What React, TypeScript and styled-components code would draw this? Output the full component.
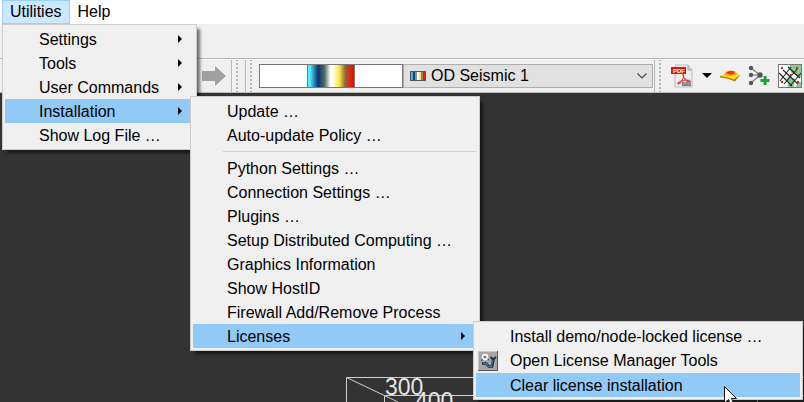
import React from "react";
import styled, { createGlobalStyle, css } from "styled-components";

const GlobalStyle = createGlobalStyle`
  *, *::before, *::after { box-sizing: border-box; }
  html, body, #root { height: 100%; }
  body {
    margin: 0;
    overflow: hidden;
    background: #333;
    color: #000;
    font: 16px/24px "Liberation Sans", Arial, sans-serif;
  }
  button, select { font: inherit; color: inherit; }
`;

const Window = styled.div`
  position: relative;
  display: flex;
  flex-direction: column;
  height: 100%;
  overflow: hidden;
`;

const MenuBar = styled.nav`
  display: flex;
  height: 24px;
  padding-left: 2px;
  background: #fff;
`;

const MenuBarSlot = styled.div`
  position: relative;
  z-index: 2;
`;

const MenuBarButton = styled.button<{ $open?: boolean }>`
  height: 24px;
  padding: 0 7px;
  line-height: 22px;
  border: 1px solid ${(p) => (p.$open ? "#99d1ff" : "transparent")};
  background: ${(p) => (p.$open ? "#cce8ff" : "transparent")};
`;

const Menu = styled.ul<{ $level: "top" | "sub" | "leaf" }>`
  position: absolute;
  z-index: 1;
  margin: 0;
  padding: 2px;
  list-style: none;
  background: #f0f0f0;
  border: 1px solid #ccc;
  box-shadow: 4px 4px 3px -1px rgba(0, 0, 0, 0.55);
  ${(p) => p.$level === "top" && css`top: 24px; left: 0; width: 195px;`}
  ${(p) => p.$level === "sub" && css`top: -3px; left: 185px; width: 290px;`}
  ${(p) => p.$level === "leaf" && css`top: -3px; left: 280px; width: 330px;`}
`;

const MenuItem = styled.li`
  position: relative;
`;

const MenuButton = styled.button<{ $active?: boolean }>`
  display: grid;
  grid-template-columns: 34px 1fr 17px;
  align-items: center;
  width: 100%;
  padding: 0;
  border: 0;
  text-align: left;
  white-space: nowrap;
  background: ${(p) => (p.$active ? "#91c9f7" : "transparent")};
`;

const MenuLabel = styled.span`
  align-self: start;
  padding-top: 2px;
  line-height: 22px;
`;

const IconCell = styled.span`
  display: flex;
  height: 24px;
  align-items: center;
  padding-left: 2px;
  &:has(svg) { height: 25px; }
`;

const Divider = styled.li`
  height: 1px;
  margin: 4px 1px 4px 30px;
  background: #d0d0d0;
`;

const UpperToolbar = styled.div`
  height: 35px;
  background: #f0f0f0;
  border-bottom: 1px solid #b8b8b8;
`;

const Toolbar = styled.div`
  display: flex;
  height: 34px;
  align-items: center;
  padding-left: 201px;
  overflow: hidden;
  background: #f0f0f0;
  border-top: 1px solid #fafafa;
  border-bottom: 1px solid #bbb;
`;

const Handle = styled.span`
  flex: none;
  align-self: stretch;
  width: 14px;
  border-left: 1px solid #b8b8b8;
  background: linear-gradient(#b4b4b4 2px, transparent 2px) 4px 3px / 2px 4px repeat-y;
`;

const ToolButton = styled.button`
  display: flex;
  flex: none;
  padding: 0;
  border: 0;
  background: none;
`;

const ToolGroup = styled.div`
  display: flex;
  flex: none;
  align-items: center;
  gap: 8px;
  padding: 0 2px;
`;

const ForwardGroup = styled.div`
  flex: none;
  width: 30px;
`;

const ColorBar = styled.div`
  display: grid;
  grid-template-columns: 1fr 48px 1fr;
  flex: none;
  width: 144px;
  height: 24px;
  background: #fff;
  border: 1px solid #777;
`;

const Spectrum = styled.span`
  border: solid #777;
  border-width: 0 1px;
  background: linear-gradient(90deg, #5ff 0, #4ce5f5 5%, #08306f 22%, #4e6d62 36%, #fff 49%, #fff 53%, #ffec4a 67%, #8b6940 81%, #f01808 94%, #f00 100%);
`;

const SelectBox = styled.div`
  position: relative;
  display: grid;
  flex: 1;
  min-width: 120px;
  height: 24px;
  margin-right: 1px;
  & > svg { position: absolute; top: 7px; pointer-events: none; }
  & > svg:first-child { left: 7px; }
  & > svg:last-child { top: 9px; right: 6px; }
`;

const ColorSelect = styled.select`
  appearance: none;
  width: 100%;
  height: 24px;
  padding: 0 24px 0 27px;
  line-height: 22px;
  background: #e1e1e1;
  border: 1px solid #adadad;
  border-radius: 0;
`;

const Scene = styled.main`
  flex: 1;
  min-height: 0;
  overflow: hidden;
  background: #333;
  & > svg { display: block; width: 100%; height: 100%; }
`;

const Pointer = styled.svg`
  position: absolute;
  z-index: 3;
  left: 248px;
  top: 13px;
  pointer-events: none;
`;

const SubArrow = () => (
  <svg width="6" height="8" viewBox="0 0 6 8" aria-hidden="true">
    <path d="M1 0 5 4 1 8Z" fill="#000" />
  </svg>
);

const LicenseIcon = () => (
  <svg width="20" height="20" viewBox="0 0 20 20" aria-hidden="true">
    <rect width="20" height="20" fill="#a6a6a6" />
    <path d="M0 20V0H20" fill="none" stroke="#c8c8c8" strokeWidth="2" />
    <path d="M0 19.5H19.5V0" fill="none" stroke="#555" />
    <path d="M4 12.500H8L11 15.500H14L15.500 8" fill="none" stroke="#1d2a36" strokeWidth="2.6" />
    <path d="M5 12.500H8L11 15.500H13.500L15 9" fill="none" stroke="#3d7db5" strokeWidth="1.1" />
    <path d="M12.500 6 15 8.500 18 6" fill="none" stroke="#1d2a36" strokeWidth="1.8" />
    <circle cx="7" cy="6" r="2.4" fill="#777" stroke="#fff" strokeWidth="1.8" />
    <path d="M3 9.500 5 8.500M9.500 8 11 9" stroke="#333" />
  </svg>
);

const ForwardIcon = () => (
  <svg width="26" height="22" viewBox="0 0 26 22" aria-hidden="true">
    <path d="M1 6H14V1L25 11 14 21V16H1Z" fill="#a0a0a0" />
  </svg>
);

const PdfIcon = () => (
  <svg width="24" height="24" viewBox="0 0 24 24" aria-hidden="true">
    <path d="M5 1H18L22 6V23H5Z" fill="#eee" stroke="#bbb" />
    <path d="M18 1V6H22" fill="#ccc" stroke="#aaa" />
    <rect x="1" y="3" width="15" height="7" fill="#e4120e" />
    <text x="3" y="9" fontSize="6" fontWeight="700" fill="#fff">PDF</text>
    <path d="M13 10c-1 2 1 4 4 7 2 2 4 1 3 0-2-2-8-1-12 2-1 1 1 2 3-1 2-3 4-6 2-8Z" fill="none" stroke="#e34040" strokeWidth="1.1" />
    <path d="M12 18h9v4h-9z" fill="#777" />
    <path d="M13 21l2-3 1 3m2-3v3m2-3v3" stroke="#ccc" fill="none" strokeWidth=".7" />
  </svg>
);

const DropIcon = () => (
  <svg width="10" height="6" viewBox="0 0 10 6" aria-hidden="true">
    <path d="M0 0H10L5 5Z" fill="#000" />
  </svg>
);

const HorizonIcon = () => (
  <svg width="20" height="12" viewBox="0 0 20 12" aria-hidden="true">
    <path d="M0 6 7 5 20 5 15 11.500Q8 8 0 7.500Z" fill="#a98614" />
    <path d="M0 6Q4 5 6 2 10 0 15 1.500L19.500 5 14 9.500Q8 6.500 0 6Z" fill="#ffdf18" />
    <path d="M4 4.500 6 2Q10 0 15 1.500L17 4Q10 8 4 4.500Z" fill="#ffa016" />
    <path d="M6.500 2.500Q10-.5 14.500 1.500 15 4.500 10 4.500Q7 4 6.500 2.500Z" fill="#ed3510" />
  </svg>
);

const NodesIcon = () => (
  <svg width="22" height="22" viewBox="0 0 22 22" aria-hidden="true">
    <path d="M3 3 12 10 3 18M3 10H12" fill="none" stroke="#777" strokeWidth="1.2" />
    <g fill="#555">
      <circle cx="3" cy="3" r="2.2" />
      <circle cx="3" cy="10" r="2.2" />
      <circle cx="3" cy="18" r="2.2" />
      <circle cx="12" cy="10" r="2.7" />
    </g>
    <path d="M17 11V20M12.500 15.500H21.500" stroke="#20a040" strokeWidth="3" />
  </svg>
);

const MapIcon = () => (
  <svg width="24" height="24" viewBox="0 0 24 24" aria-hidden="true">
    <rect x=".5" y=".5" width="23" height="23" fill="#fff" stroke="#777" />
    <path d="M12 1H23V13Q19 14 16 10 11 9 12 1M10 12 17 15 16 23H9Q12 18 8 16M20 18h3v5h-5Z" fill="#86cc93" />
    <path d="M1 9 14 22M5 6 20 20M10 3 22 14M2 17 13 3M6 20 20 4M12 22 23 9" fill="none" stroke="#222" strokeWidth="1.1" />
    <g fill="#e4202b">
      <circle cx="4" cy="4" r="1.2" />
      <circle cx="13" cy="11" r="1.2" />
      <circle cx="19" cy="4" r="1.2" />
      <circle cx="4" cy="18" r="1.2" />
      <circle cx="20" cy="18" r="1.2" />
    </g>
  </svg>
);

const SwatchIcon = () => (
  <svg width="16" height="10" viewBox="0 0 16 10" aria-hidden="true">
    <rect width="16" height="10" fill="#555" />
    <path d="M1 1h2v8H1z" fill="#39b8d0" />
    <path d="M3 1h2v8H3z" fill="#173e78" />
    <path d="M5 1h2v8H5z" fill="#82968c" />
    <path d="M7 1h2v8H7z" fill="#fff" />
    <path d="M9 1h2v8H9z" fill="#f3e58a" />
    <path d="M11 1h2v8h-2z" fill="#a57b40" />
    <path d="M13 1h2v8h-2z" fill="#d8261c" />
  </svg>
);

const ChevronIcon = () => (
  <svg width="10" height="6" viewBox="0 0 10 6" aria-hidden="true">
    <path d="M.5 .5 5 5 9.500 .5" fill="none" stroke="#444" strokeWidth="1.1" />
  </svg>
);

const CursorIcon = () => (
  <Pointer width="14" height="21" viewBox="0 0 14 21" aria-hidden="true">
    <path d="M.5 .5V17L4.500 13.500 7 19.500 10 18.200 7.500 12.500H12.500Z" fill="#fff" stroke="#111" />
  </Pointer>
);

type Entry = {
  label: string;
  active?: boolean;
  arrow?: boolean;
  icon?: React.ReactNode;
  submenu?: React.ReactNode;
  overlay?: React.ReactNode;
};

const Item = ({ label, active, submenu, arrow, icon, overlay }: Entry) => (
  <MenuItem role="none">
    <MenuButton role="menuitem" $active={active} aria-haspopup={arrow || submenu ? "menu" : undefined}>
      <IconCell>{icon}</IconCell>
      <MenuLabel>{label}</MenuLabel>
      {(arrow || submenu) && <SubArrow />}
    </MenuButton>
    {submenu}
    {overlay}
  </MenuItem>
);

const LicensesMenu = () => (
  <Menu $level="leaf" role="menu" aria-label="Licenses">
    <Item label="Install demo/node-locked license …" />
    <Item label="Open License Manager Tools" icon={<LicenseIcon />} />
    <Item label="Clear license installation" active overlay={<CursorIcon />} />
  </Menu>
);

const InstallationMenu = () => (
  <Menu $level="sub" role="menu" aria-label="Installation">
    <Item label="Update …" />
    <Item label="Auto-update Policy …" />
    <Divider role="separator" />
    <Item label="Python Settings …" />
    <Item label="Connection Settings …" />
    <Item label="Plugins …" />
    <Item label="Setup Distributed Computing …" />
    <Item label="Graphics Information" />
    <Item label="Show HostID" />
    <Item label="Firewall Add/Remove Process" />
    <Item label="Licenses" active submenu={<LicensesMenu />} />
  </Menu>
);

const UtilitiesMenu = () => (
  <Menu $level="top" role="menu" aria-label="Utilities">
    <Item label="Settings" arrow />
    <Item label="Tools" arrow />
    <Item label="User Commands" arrow />
    <Item label="Installation" active submenu={<InstallationMenu />} />
    <Item label="Show Log File …" />
  </Menu>
);

export default function App() {
  return (
    <Window>
      <GlobalStyle />
      <MenuBar>
        <MenuBarSlot>
          <MenuBarButton $open aria-haspopup="menu" aria-expanded="true">Utilities</MenuBarButton>
          <UtilitiesMenu />
        </MenuBarSlot>
        <MenuBarButton aria-haspopup="menu">Help</MenuBarButton>
      </MenuBar>
      <UpperToolbar />
      <Toolbar role="toolbar" aria-label="View tools">
        <ForwardGroup>
          <ToolButton aria-label="Forward"><ForwardIcon /></ToolButton>
        </ForwardGroup>
        <Handle />
        <Handle />
        <ColorBar>
          <span />
          <Spectrum />
          <span />
        </ColorBar>
        <SelectBox>
          <SwatchIcon />
          <ColorSelect aria-label="Color table" defaultValue="seismic1">
            <option value="seismic1">OD Seismic 1</option>
          </ColorSelect>
          <ChevronIcon />
        </SelectBox>
        <Handle />
        <ToolGroup>
          <ToolButton aria-label="Create PDF"><PdfIcon /></ToolButton>
          <ToolButton aria-label="More"><DropIcon /></ToolButton>
          <ToolButton aria-label="Horizon"><HorizonIcon /></ToolButton>
          <ToolButton aria-label="Add node"><NodesIcon /></ToolButton>
          <ToolButton aria-label="Base map"><MapIcon /></ToolButton>
        </ToolGroup>
      </Toolbar>
      <Scene>
        <svg role="img" aria-label="Survey box">
          <path d="M346.500 309V284.500H1200M346.500 284.500 398 309M384.500 309V302.500H1200M757.500 303V309" fill="none" stroke="#d0d0d0" />
          <g fill="#e6e6e6" fontSize="23">
            <text x="385" y="302">300</text>
            <text x="415" y="316">400</text>
          </g>
        </svg>
      </Scene>
    </Window>
  );
}
